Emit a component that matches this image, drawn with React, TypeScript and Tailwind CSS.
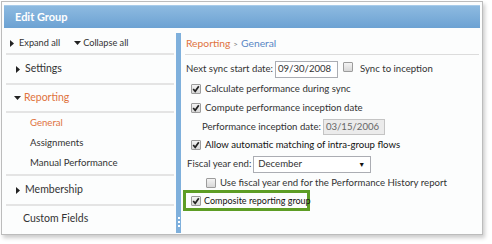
const Check = ({ on = true }: { on?: boolean }) => (
  <span className="inline-flex items-center justify-center w-[10px] h-[10px] border border-[#9c9c9c] rounded-[1px] bg-gradient-to-b from-[#f4f4f4] to-[#d8d8d8] shrink-0">
    {on && (
      <svg width="8" height="8" viewBox="0 0 8 8">
        <path d="M1.2 4 L3.2 6.3 L6.8 1.2" fill="none" stroke="#222" strokeWidth="1.7" />
      </svg>
    )}
  </span>
);

const TriRight = () => (
  <svg width="4" height="7" viewBox="0 0 4 7" className="shrink-0">
    <path d="M0 0 L4 3.5 L0 7 Z" fill="#222" />
  </svg>
);

const TriDown = () => (
  <svg width="7" height="4" viewBox="0 0 7 4" className="shrink-0">
    <path d="M0 0 L7 0 L3.5 4 Z" fill="#222" />
  </svg>
);

const Sep = () => <div className="h-[2px] bg-[#e4e4e4]" />;

export default function App() {
  return (
    <div className="w-[492px] h-[244px] bg-white relative whitespace-nowrap" style={{ fontFamily: 'Lato, sans-serif' }}>
      <div className="absolute left-[1px] top-[1px] w-[482px] h-[234px] border border-[#bcbcbc] bg-[#fcfdfd] shadow-[2px_3px_4px_rgba(0,0,0,0.2)] px-[2px] pt-[3px] flex flex-col">
        {/* Header */}
        <div className="h-[23px] shrink-0 bg-gradient-to-b from-[#8dbae0] to-[#6ca2d3] border-t border-[#a7cbe9] flex items-center pl-[11px] text-white font-bold text-[11px]">
          Edit Group
        </div>

        <div className="flex flex-1 pt-[5px] pb-[1px]">
          {/* Left nav */}
          <div className="w-[168px] shrink-0 ml-[2px] flex flex-col text-[#333]">
            <div className="h-[20px] flex items-center text-[9.2px] pl-[4px]">
              <TriRight />
              <span className="ml-[5px]">Expand all</span>
              <span className="ml-[14px]"><TriDown /></span>
              <span className="ml-[2px]">Collapse all</span>
            </div>
            <Sep />
            <div className="h-[28px] flex items-center pl-[10px] text-[10.5px]">
              <TriRight />
              <span className="ml-[5px]">Settings</span>
            </div>
            <Sep />
            <div className="h-[26px] flex items-center pl-[8px] text-[10.5px]">
              <TriDown />
              <span className="ml-[3px] text-[#e0733d]">Reporting</span>
            </div>
            <Sep />
            <div className="flex flex-col pl-[24px] text-[9.6px]">
              <div className="h-[20px] flex items-center text-[#e0733d]">General</div>
              <div className="h-[20px] flex items-center">Assignments</div>
              <div className="h-[21px] flex items-center">Manual Performance</div>
            </div>
            <Sep />
            <div className="h-[28px] flex items-center pl-[10px] text-[10.5px]">
              <TriRight />
              <span className="ml-[5px]">Membership</span>
            </div>
            <Sep />
            <div className="h-[26px] flex items-center pl-[17px] text-[10.5px]">Custom Fields</div>
          </div>

          {/* Splitter */}
          <div className="w-[5px] shrink-0 ml-[2px] bg-[#7fb0dc] flex flex-col items-center justify-end pb-[6px] gap-[2px]">
            <span className="w-[2px] h-[2px] bg-white" />
            <span className="w-[2px] h-[2px] bg-white" />
            <span className="w-[2px] h-[2px] bg-white" />
          </div>

          {/* Right content */}
          <div className="flex-1 min-w-0 flex flex-col pl-[4px] pr-[1px] text-[9.6px] text-[#333]">
            <div className="h-[21px] flex items-center pl-[1px] text-[10.3px]">
              <span className="text-[#e0733d]">Reporting</span>
              <span className="mx-[3px] text-[#777] text-[8px]">&gt;</span>
              <span className="text-[#5a86c4]">General</span>
            </div>
            <div className="h-[1px] bg-[#dcdcdc]" />
            <div className="h-[22px] mt-[3px] flex items-center pl-[1px]">
              <span>Next sync start date:</span>
              <span className="ml-[2px] w-[63px] h-[17px] border border-[#abadb3] bg-white flex items-center pl-[2px]">09/30/2008</span>
              <span className="ml-[5px]"><Check on={false} /></span>
              <span className="ml-[7px]">Sync to inception</span>
            </div>
            <div className="h-[18px] flex items-center pl-[6px]">
              <Check />
              <span className="ml-[4px]">Calculate performance during sync</span>
            </div>
            <div className="h-[20px] flex items-center pl-[6px]">
              <Check />
              <span className="ml-[4px]">Compute performance inception date</span>
            </div>
            <div className="h-[18px] flex items-center pl-[17px]">
              <span>Performance inception date:</span>
              <span className="ml-[2px] w-[62px] h-[16px] border border-[#c4c4c4] bg-[#ebebeb] text-[#666] flex items-center pl-[2px]">03/15/2006</span>
            </div>
            <div className="h-[18px] flex items-center pl-[6px] text-[#111]">
              <Check />
              <span className="ml-[4px]">Allow automatic matching of intra-group flows</span>
            </div>
            <div className="h-[20px] flex items-center pl-[2px]">
              <span>Fiscal year end:</span>
              <span className="ml-[2px] w-[118px] h-[17px] border border-[#abadb3] bg-white flex items-center justify-between pl-[4px] pr-[5px]">
                <span>December</span>
                <span className="text-[7px] text-[#111]">▼</span>
              </span>
            </div>
            <div className="h-[14px] mt-[2px] flex items-center pl-[21px]">
              <Check on={false} />
              <span className="ml-[4px]">Use fiscal year end for the Performance History report</span>
            </div>
            <div className="self-start ml-[-2px] w-[127px] h-[21px] border-[3px] border-[#5d9d25] flex items-center pl-[5px] text-[#111] text-[9px]">
              <Check />
              <span className="ml-[3px]">Composite reporting group</span>
            </div>
          </div>
        </div>
      </div>
    </div>
  );
}
